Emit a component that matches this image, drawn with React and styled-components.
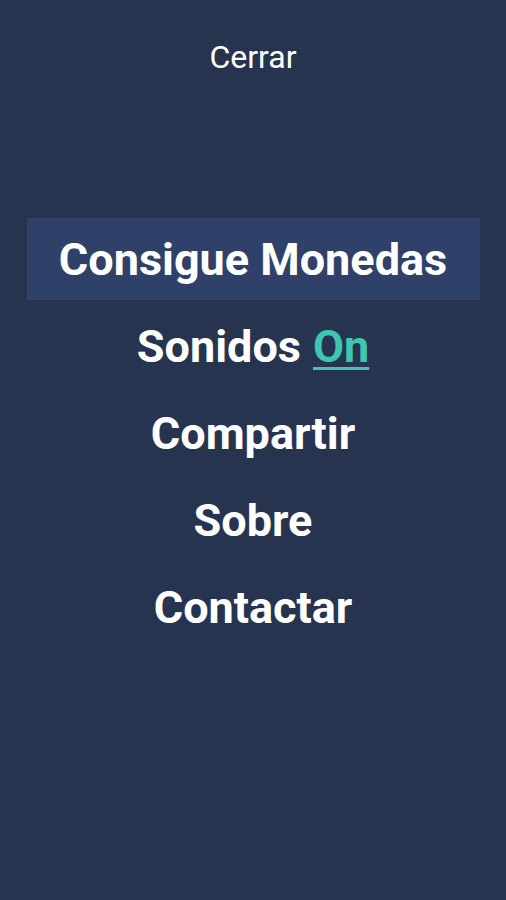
import React from 'react';
import styled, { createGlobalStyle } from 'styled-components';

const Global = createGlobalStyle`
  html, body {
    margin: 0;
    padding: 0;
    background: #27344f;
  }
`;

const Screen = styled.div`
  width: 506px;
  height: 900px;
  background: #27344f;
  font-family: Roboto, "Liberation Sans", sans-serif;
  color: #ffffff;
  display: flex;
  flex-direction: column;
  align-items: center;
`;

const CloseButton = styled.div`
  margin-top: 38px;
  font-size: 32px;
  line-height: 38px;
  font-weight: 400;
  cursor: pointer;
`;

const Menu = styled.ul`
  list-style: none;
  margin: 142px 0 0 0;
  padding: 0;
  width: 453px;
  display: flex;
  flex-direction: column;
  gap: 5px;
`;

const MenuItem = styled.li`
  height: 82px;
  display: flex;
  align-items: center;
  justify-content: center;
  font-size: 45px;
  font-weight: 700;
  background: ${(p) => (p.active ? '#2f4169' : 'transparent')};
  cursor: pointer;
`;

const Toggle = styled.span`
  color: #3ec6b1;
  text-decoration: underline;
  text-underline-offset: 5px;
  text-decoration-thickness: 3px;
  margin-left: 12px;
`;

export default function App() {
  return (
    <>
      <Global />
      <Screen>
        <CloseButton>Cerrar</CloseButton>
        <Menu>
          <MenuItem active>Consigue Monedas</MenuItem>
          <MenuItem>
            Sonidos<Toggle>On</Toggle>
          </MenuItem>
          <MenuItem>Compartir</MenuItem>
          <MenuItem>Sobre</MenuItem>
          <MenuItem>Contactar</MenuItem>
        </Menu>
      </Screen>
    </>
  );
}
